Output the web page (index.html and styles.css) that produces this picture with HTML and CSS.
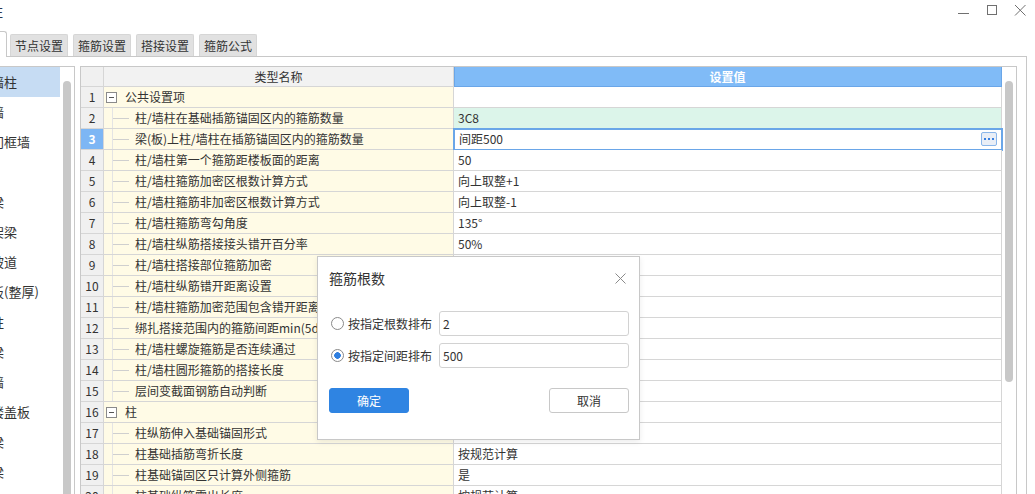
FILE: index.html
```html
<!DOCTYPE html>
<html lang="zh">
<head>
<meta charset="utf-8">
<title>计算设置 - 柱</title>
<link rel="stylesheet" href="styles.css">
</head>
<body>
<header class="titlebar">
  <span class="title">柱</span>
  <div class="winctl">
    <svg class="ctl" viewBox="0 0 12 12"><path d="M0 9.5H11" stroke="#707070" stroke-width="1" fill="none"/></svg>
    <svg class="ctl" viewBox="0 0 12 12"><rect x="1.5" y="1.5" width="9" height="9" stroke="#707070" stroke-width="1" fill="none"/></svg>
    <svg class="ctl" viewBox="0 0 12 12"><path d="M1 1L11.5 11.5M11.5 1L1 11.5" stroke="#707070" stroke-width="1" fill="none"/></svg>
  </div>
</header>

<nav class="tabs">
  <div class="tab tab-active"></div>
  <div class="tab">节点设置</div>
  <div class="tab">箍筋设置</div>
  <div class="tab">搭接设置</div>
  <div class="tab">箍筋公式</div>
</nav>

<main class="panel">
  <aside class="sidebar">
    <ul class="side-list">
      <li class="side-item sel">墙柱</li>
      <li class="side-item">墙</li>
      <li class="side-item">门框墙</li>
      <li class="side-item"></li>
      <li class="side-item">梁</li>
      <li class="side-item">架梁</li>
      <li class="side-item">坡道</li>
      <li class="side-item">板(整厚)</li>
      <li class="side-item">柱</li>
      <li class="side-item">梁</li>
      <li class="side-item">墙</li>
      <li class="side-item">楼盖板</li>
      <li class="side-item">梁</li>
      <li class="side-item">梁</li>
    </ul>
    <div class="side-scroll"><div class="thumb"></div></div>
  </aside>

  <section class="table-wrap">
    <div class="grid">
      <div class="c num hd"></div>
      <div class="c hd hd-name">类型名称</div>
      <div class="c hd hd-val">设置值</div>

      <div class="c num">1</div>
      <div class="c name"><span class="exp"></span>公共设置项</div>
      <div class="c val"></div>

      <div class="c num">2</div>
      <div class="c name"><span class="br"></span>柱/墙柱在基础插筋锚固区内的箍筋数量</div>
      <div class="c val mint">3C8</div>

      <div class="c num cur">3</div>
      <div class="c name"><span class="br"></span>梁(板)上柱/墙柱在插筋锚固区内的箍筋数量</div>
      <div class="c val edit"><span>间距500</span><span class="more"><i></i><i></i><i></i></span></div>

      <div class="c num">4</div>
      <div class="c name"><span class="br"></span>柱/墙柱第一个箍筋距楼板面的距离</div>
      <div class="c val">50</div>

      <div class="c num">5</div>
      <div class="c name"><span class="br"></span>柱/墙柱箍筋加密区根数计算方式</div>
      <div class="c val">向上取整+1</div>

      <div class="c num">6</div>
      <div class="c name"><span class="br"></span>柱/墙柱箍筋非加密区根数计算方式</div>
      <div class="c val">向上取整-1</div>

      <div class="c num">7</div>
      <div class="c name"><span class="br"></span>柱/墙柱箍筋弯勾角度</div>
      <div class="c val">135°</div>

      <div class="c num">8</div>
      <div class="c name"><span class="br"></span>柱/墙柱纵筋搭接接头错开百分率</div>
      <div class="c val">50%</div>

      <div class="c num">9</div>
      <div class="c name"><span class="br"></span>柱/墙柱搭接部位箍筋加密</div>
      <div class="c val"></div>

      <div class="c num">10</div>
      <div class="c name"><span class="br"></span>柱/墙柱纵筋错开距离设置</div>
      <div class="c val"></div>

      <div class="c num">11</div>
      <div class="c name"><span class="br"></span>柱/墙柱箍筋加密范围包含错开距离</div>
      <div class="c val"></div>

      <div class="c num">12</div>
      <div class="c name"><span class="br"></span>绑扎搭接范围内的箍筋间距min(5d,100)</div>
      <div class="c val"></div>

      <div class="c num">13</div>
      <div class="c name"><span class="br"></span>柱/墙柱螺旋箍筋是否连续通过</div>
      <div class="c val"></div>

      <div class="c num">14</div>
      <div class="c name"><span class="br"></span>柱/墙柱圆形箍筋的搭接长度</div>
      <div class="c val"></div>

      <div class="c num">15</div>
      <div class="c name"><span class="br"></span>层间变截面钢筋自动判断</div>
      <div class="c val"></div>

      <div class="c num">16</div>
      <div class="c name"><span class="exp"></span>柱</div>
      <div class="c val"></div>

      <div class="c num">17</div>
      <div class="c name"><span class="br"></span>柱纵筋伸入基础锚固形式</div>
      <div class="c val"></div>

      <div class="c num">18</div>
      <div class="c name"><span class="br"></span>柱基础插筋弯折长度</div>
      <div class="c val">按规范计算</div>

      <div class="c num">19</div>
      <div class="c name"><span class="br"></span>柱基础锚固区只计算外侧箍筋</div>
      <div class="c val">是</div>

      <div class="c num">20</div>
      <div class="c name"><span class="br"></span>柱基础纵筋露出长度</div>
      <div class="c val">按规范计算</div>
    </div>
    <div class="vscroll"><div class="thumb"></div></div>
  </section>
</main>

<div class="dialog">
  <div class="dlg-head">
    <span class="dlg-title">箍筋根数</span>
    <svg class="dlg-close" viewBox="0 0 11 11"><path d="M0.5 0.5L10.5 10.5M10.5 0.5L0.5 10.5" stroke="#8a8a8a" stroke-width="1" fill="none"/></svg>
  </div>
  <div class="dlg-body">
    <div class="opt"><span class="radio"></span><span class="opt-label">按指定根数排布</span><span class="input">2</span></div>
    <div class="opt"><span class="radio on"></span><span class="opt-label">按指定间距排布</span><span class="input">500</span></div>
  </div>
  <div class="dlg-foot">
    <button class="btn primary">确定</button>
    <button class="btn">取消</button>
  </div>
</div>
</body>
</html>
```

FILE: styles.css
```css
* { box-sizing: border-box; margin: 0; padding: 0; }
html, body { width: 1035px; height: 494px; overflow: hidden; background: #fff; }
body {
  position: relative;
  font-family: "Noto Sans CJK SC", "Noto Sans", sans-serif;
  font-size: 12px;
  color: #333;
}

/* title bar */
.titlebar {
  height: 31px;
  display: flex;
  justify-content: space-between;
  align-items: flex-start;
  padding-top: 4px;
}
.title { font-size: 14px; line-height: 14px; margin-left: -11px; color: #2b3650; }
.winctl { display: flex; gap: 16px; margin-right: 9px; }
.ctl { display: block; width: 12px; height: 12px; }

/* tabs */
.tabs { height: 25px; display: flex; align-items: flex-end; gap: 5px; }
.tab {
  width: 58px;
  height: 22px;
  background: #e1e1e1;
  border: 1px solid #d6d6d6;
  border-bottom: none;
  border-radius: 2px 2px 0 0;
  text-align: center;
  line-height: 21px;
  color: #333;
}
.tab-active {
  width: 27px;
  height: 26px;
  margin-left: -20px;
  margin-right: -2px;
  margin-bottom: -1px;
  background: #fff;
  border-color: #c8c8c8;
  border-radius: 0 3px 0 0;
  position: relative;
  z-index: 1;
}

/* panel */
.panel {
  width: 1027px;
  height: 438px;
  border-top: 1px solid #c8c8c8;
  border-right: 1px solid #c8c8c8;
  display: flex;
  padding: 9px 9px 0 0;
}

.sidebar {
  width: 75px;
  margin-right: 5px;
  border-top: 1px solid #c8c8c8;
  border-right: 1px solid #c8c8c8;
  display: flex;
}
.side-list { width: 62px; list-style: none; font-size: 13px; overflow: hidden; }
.side-item {
  width: 60px;
  height: 30px;
  line-height: 30px;
  white-space: nowrap;
  text-indent: -9px;
  color: #333;
}
.side-item.sel { background: #c6dcf3; }
.side-scroll { width: 12px; padding: 14px 0 0 1px; }
.thumb { width: 8px; height: 100%; background: #c8c8c8; border-radius: 4px 4px 0 0; }

/* table */
.table-wrap {
  width: 937px;
  border: 1px solid #c8c8c8;
  border-bottom: none;
  display: flex;
}
.grid {
  width: 921px;
  display: grid;
  grid-template-columns: 23px 350px 548px;
  grid-template-rows: 20px;
  grid-auto-rows: 21px;
  align-content: start;
}
.vscroll { width: 14px; padding: 14px 0 0 3px; }
.vscroll .thumb { height: 301px; border-radius: 4px; }

.c {
  border-right: 1px solid #d6d6d6;
  border-bottom: 1px solid #d6d6d6;
  line-height: 20px;
  white-space: nowrap;
  overflow: hidden;
}
.num { background: #f0f0f0; text-align: center; color: #333; }
.num.cur { background: #7db6f4; color: #fff; font-weight: bold; }
.hd { line-height: 19px; text-align: center; }
.hd-name { background: #f2f2f2; }
.hd-val {
  background: #80bbf7;
  color: #fff;
  font-weight: bold;
  border-right-color: #6aa6e8;
  border-bottom-color: #6aa6e8;
  box-shadow: inset 1px 0 0 #6aa6e8;
}
.name { background: #fffbe6; display: flex; align-items: center; }
.val { background: #fff; padding-left: 4px; }
.val.mint { background: #dcf5ea; }
.val.edit {
  display: flex;
  justify-content: space-between;
  align-items: center;
  padding-right: 4px;
  padding-left: 5px;
  outline: 2px solid #6aa6e8;
  outline-offset: -1px;
}
.more {
  width: 16px;
  height: 14px;
  border: 1px solid #8ab6ea;
  border-radius: 2px;
  background: #e9eef6;
  display: flex;
  justify-content: center;
  align-items: center;
  gap: 2px;
}
.more i { width: 2px; height: 2px; background: #3a80e0; }

.exp {
  width: 11px;
  height: 11px;
  margin-left: 2px;
  margin-right: 8px;
  border: 1px solid #8a8a8a;
  background: linear-gradient(#555, #555) center / 5px 1px no-repeat, #fff;
}
.br {
  align-self: stretch;
  width: 17px;
  margin-left: 8px;
  margin-right: 6px;
  border-left: 1px solid #e4e4e4;
  background: linear-gradient(#cfcfcf, #cfcfcf) center / 100% 1px no-repeat;
}

/* dialog */
.dialog {
  position: absolute;
  left: 317px;
  top: 256px;
  width: 323px;
  height: 184px;
  background: #fff;
  border: 1px solid #c8c8c8;
  box-shadow: 0 2px 6px rgba(0, 0, 0, 0.08);
}
.dlg-head {
  height: 42px;
  display: flex;
  align-items: center;
  justify-content: space-between;
  padding: 0 13px 0 11px;
}
.dlg-title { font-size: 14px; color: #333; }
.dlg-close { display: block; width: 11px; height: 11px; }
.dlg-body { padding: 12px 10px 0 13px; display: flex; flex-direction: column; gap: 7px; }
.opt { display: flex; align-items: center; height: 25px; }
.radio {
  width: 13px;
  height: 13px;
  margin-right: 4px;
  border: 1px solid #8a8a8a;
  border-radius: 50%;
  background: #fff;
}
.radio.on { background: radial-gradient(circle, #2f7fe0 0 3px, #fff 3.6px); }
.opt-label { width: 84px; margin-right: 7px; font-size: 12px; color: #333; }
.input {
  flex: 1;
  height: 25px;
  border: 1px solid #d2d2d2;
  border-radius: 3px;
  padding-left: 3px;
  line-height: 23px;
  font-size: 12px;
  color: #333;
}
.dlg-foot { display: flex; justify-content: space-between; padding: 20px 10px 0 11px; }
.btn {
  width: 80px;
  height: 25px;
  border: 1px solid #c8c8c8;
  border-radius: 3px;
  background: #fff;
  font-family: inherit;
  font-size: 12px;
  color: #333;
}
.btn.primary { background: #2f84e2; border-color: #2f84e2; color: #fff; }
```
